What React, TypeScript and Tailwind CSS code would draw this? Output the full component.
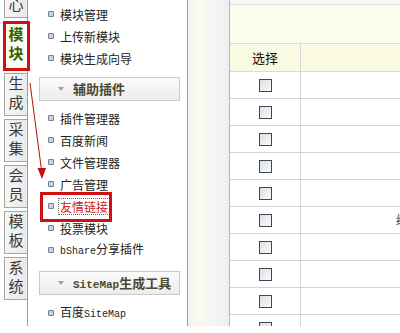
import React from "react";

const cjk = { fontFamily: '"Noto Sans CJK SC", "Noto Sans", sans-serif' };
const mono = { fontFamily: '"Liberation Mono", "DejaVu Sans Mono", monospace' };

function Tab({ a, b, h, sel, extra }: { a: string; b: string; h: string; sel?: boolean; extra?: string }) {
  return (
    <div
      className={`ml-[4px] w-[23px] shrink-0 ${h} ${extra ?? ""} border-l border-t border-b border-[#a6a6a6] flex flex-col items-center justify-center pb-[5px] ${
        sel ? "bg-[#fbfbf6] text-[#336600] font-bold" : "bg-gradient-to-r from-[#f6f6f6] to-[#e9e9e9] text-[#3a3a3a]"
      }`}
    >
      <span className="text-[15px] leading-[19px]">{a}</span>
      <span className="text-[15px] leading-[19px]">{b}</span>
    </div>
  );
}

function Item({ children, red }: { children: React.ReactNode; red?: boolean }) {
  return (
    <div className="h-[22px] flex items-center pl-[20px]">
      <span className="w-[6px] h-[6px] border border-[#6f8096] bg-[#c9d2de] rounded-[1px] mr-[6px] shrink-0" />
      <span
        className={`text-[12px] leading-[15px] whitespace-nowrap ${
          red ? "text-[#cc2222] outline outline-1 outline-dotted outline-[#666] px-[1px] -ml-[1px]" : "text-[#222]"
        }`}
      >
        {children}
      </span>
    </div>
  );
}

function Header({ children, mt, mb }: { children: React.ReactNode; mt: string; mb: string }) {
  return (
    <div
      className={`${mt} ${mb} ml-[11px] w-[141px] h-[24px] border border-[#c9c9c9] bg-gradient-to-b from-[#fbfbfb] to-[#ececec] flex items-center pl-[17px]`}
    >
      <svg width="8" height="6" viewBox="0 0 8 6" className="mr-[8px]">
        <polygon points="1,1 7,1 4,5" fill="#8fb36b" />
      </svg>
      <span className="text-[13px] font-bold text-[#4a4a2e] whitespace-nowrap">{children}</span>
    </div>
  );
}

function Checkbox() {
  return <span className="w-[13px] h-[13px] border border-[#3b4857] bg-gradient-to-br from-[#dcdfe4] to-[#fbfbfb]" />;
}

export default function App() {
  const rows = Array.from({ length: 10 });
  return (
    <div className="w-[400px] h-[333px] bg-white overflow-hidden relative" style={cjk}>
      <div className="flex h-[326px]">
        {/* tab column */}
        <div className="w-[28px] border-r border-[#9c9c9c] flex flex-col gap-[3px] overflow-hidden">
          <Tab a="核" b="心" h="h-[44px]" extra="-mt-[26px]" />
          <Tab a="模" b="块" h="h-[49px]" sel />
          <Tab a="生" b="成" h="h-[43px]" />
          <Tab a="采" b="集" h="h-[43px]" />
          <Tab a="会" b="员" h="h-[43px]" />
          <Tab a="模" b="板" h="h-[43px]" />
          <Tab a="系" b="统" h="h-[43px]" />
        </div>

        {/* menu panel */}
        <div className="w-[160px] border-r border-[#9c9c9c] pt-[3px]">
          <Item>模块管理</Item>
          <Item>上传新模块</Item>
          <Item>模块生成向导</Item>
          <Header mt="mt-[8px]" mb="mb-[6px]">辅助插件</Header>
          <Item>插件管理器</Item>
          <Item>百度新闻</Item>
          <Item>文件管理器</Item>
          <Item>广告管理</Item>
          <Item red>友情链接</Item>
          <Item>投票模块</Item>
          <Item>
            <span className="text-[10px]" style={mono}>bShare</span>分享插件
          </Item>
          <Header mt="mt-[10px]" mb="mb-[7px]">
            <span className="text-[11px]" style={mono}>SiteMap</span>生成工具
          </Header>
          <Item>
            百度<span className="text-[10px]" style={mono}>SiteMap</span>
          </Item>
        </div>

        {/* splitter */}
        <div className="w-[42px] border-r border-[#b5b5b5] bg-[linear-gradient(to_right,#f3f3f3_0%,#fbf9ef_30%,#f7f6ee_45%,#f6f6f6_50%,#efefef_100%)]" />

        {/* table */}
        <div className="flex-1 flex flex-col overflow-hidden">
          <div className="h-[5px] shrink-0 bg-[#f7f7f7] border-b border-[#dcdcdc]" />
          <div className="h-[39px] shrink-0 bg-[#fdfdee] border-b border-[#d9d9d9]" />
          <div className="h-[28px] shrink-0 bg-[#fafae2] border-b border-[#d9d9d9] flex">
            <div className="w-[71px] border-r border-[#d6d6d6] flex items-center justify-center text-[13px] text-[#111]">
              选择
            </div>
            <div className="flex-1" />
          </div>
          {rows.map((_, i) => (
            <div key={i} className="h-[27px] border-b border-[#d3d3d3] flex shrink-0">
              <div className="w-[71px] border-r border-[#d6d6d6] flex items-center justify-center">
                <Checkbox />
              </div>
              <div className="flex-1 flex items-center pl-[95px] text-[12px] text-[#333] whitespace-nowrap overflow-hidden">
                {i === 5 ? "编辑" : ""}
              </div>
            </div>
          ))}
        </div>
      </div>

      {/* annotations */}
      <div className="absolute left-[3px] top-[21px] w-[27px] h-[50px] border-[3px] border-[#d01010]" />
      <div className="absolute left-[40px] top-[192px] w-[72px] h-[30px] border-[3px] border-[#d01010]" />
      <svg className="absolute left-0 top-0" width="400" height="333" viewBox="0 0 400 333">
        <line x1="30" y1="83" x2="41.5" y2="170" stroke="#b01010" strokeWidth="1" />
        <polygon points="37.5,168 46,168 42,179" fill="#c01010" />
      </svg>
    </div>
  );
}
